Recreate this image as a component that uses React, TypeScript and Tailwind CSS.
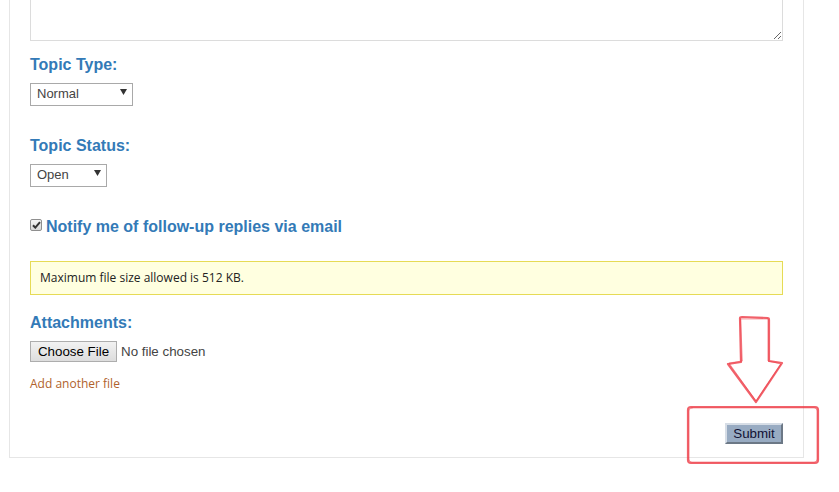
import React from 'react';

const labelCls = "block text-[16px] leading-[20px] font-bold text-[#337ab7] font-['Liberation_Sans',Arial,sans-serif]";

const Caret = () => (
  <svg className="pointer-events-none absolute right-[6px] top-[8px]" width="7" height="6" viewBox="0 0 7 6">
    <path d="M0 0 H7 L3.5 6 Z" fill="#333" />
  </svg>
);

const SelectBox: React.FC<{ value: string; options: string[]; width: string }> = ({ value, options, width }) => (
  <div className={`relative mt-[6px] h-[23px] ${width}`}>
    <select
      defaultValue={value}
      className="h-full w-full appearance-none border border-[#a9a9a9] bg-white pb-[2px] pl-[6px] text-[13px] text-[#444] outline-none font-['Liberation_Sans',Arial,sans-serif]"
    >
      {options.map(o => (
        <option key={o}>{o}</option>
      ))}
    </select>
    <Caret />
  </div>
);

export default function App() {
  return (
    <div className="relative h-[492px] w-[839px] overflow-hidden bg-white font-['Liberation_Sans',Arial,sans-serif]">
      <div className="ml-[9px] -mt-[60px] w-[795px] border border-[#e6e6e6] bg-white px-5 pt-5 pb-[13px]">
        <textarea className="block h-[80px] w-full resize-y border border-[#dcdcdc] bg-white outline-none" />

        <label className={`${labelCls} mt-[14px]`}>Topic Type:</label>
        <SelectBox value="Normal" options={['Normal', 'Sticky', 'Announcement']} width="w-[103px]" />

        <label className={`${labelCls} mt-[32px]`}>Topic Status:</label>
        <SelectBox value="Open" options={['Open', 'Closed']} width="w-[77px]" />

        <div className="mt-[32px] flex h-[20px] items-start gap-[4px]">
          <span className="relative mt-[2px] flex h-[12px] w-[12px] items-center justify-center rounded-[2px] border border-[#8f8f8f] bg-gradient-to-b from-[#f4f4f4] to-[#d8d8d8]">
            <input type="checkbox" defaultChecked className="absolute inset-0 m-0 appearance-none opacity-0" />
            <svg width="9" height="8" viewBox="0 0 9 8">
              <path d="M1 4.2 L3.3 6.6 L8 1.2" fill="none" stroke="#333" strokeWidth="2" />
            </svg>
          </span>
          <span className="text-[16px] leading-[20px] font-bold text-[#337ab7]">Notify me of follow-up replies via email</span>
        </div>

        <div className="mt-[24px] flex h-[34px] items-center border border-[#e6db55] bg-[#ffffe0] px-[9px] text-[12px] text-[#222] font-['Open_Sans',sans-serif]">
          Maximum file size allowed is 512 KB.
        </div>

        <label className={`${labelCls} mt-[18px]`}>Attachments:</label>
        <div className="mt-[8px] flex h-[21px] items-center">
          <button className="h-[21px] w-[87px] border border-[#adadad] bg-gradient-to-b from-[#f2f2f2] to-[#dddddd] text-[13.33px] leading-none text-black">
            Choose File
          </button>
          <span className="ml-[4px] text-[13.33px] text-[#444]">No file chosen</span>
        </div>

        <div className="mt-[14px] h-[16px] text-[12px] leading-[16px] text-[#b0622c] font-['Open_Sans',sans-serif]">
          Add another file
        </div>

        <div className="mt-[31px] flex justify-end">
          <button className="h-[21px] w-[58px] border-2 border-t-[#d6dde6] border-l-[#d6dde6] border-b-[#6c7886] border-r-[#6c7886] bg-[#98abc2] text-[13.33px] leading-none text-[#111133]">
            Submit
          </button>
        </div>
      </div>

      <svg className="pointer-events-none absolute left-0 top-0" width="839" height="492" viewBox="0 0 839 492">
        <g fill="none" stroke="#ee3a45" strokeLinejoin="round" strokeLinecap="round">
          <path d="M740 318 Q740 317 742 317 L768 318 Q769 318 769 320 L769 361 L782 363 L756 402 L728 364 L741 362 Z" strokeWidth="2.2" opacity="0.8" />
          <path d="M741 319 L768 319 L768 361 L781 364 L756 401 L729 363 L742 361 Z" strokeWidth="1" opacity="0.45" />
          <rect x="688" y="407" width="130" height="56" rx="3" strokeWidth="2.2" opacity="0.8" />
          <rect x="689" y="408" width="128" height="54" rx="3" strokeWidth="1" opacity="0.45" />
        </g>
      </svg>
    </div>
  );
}
